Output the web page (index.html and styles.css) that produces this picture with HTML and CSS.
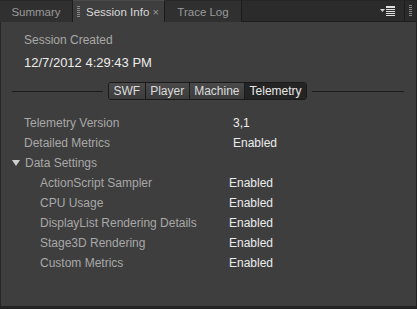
FILE: index.html
```html
<!DOCTYPE html>
<html>
<head>
<meta charset="utf-8">
<link rel="stylesheet" href="styles.css">
</head>
<body>
<div class="panel">
  <div class="tabbar">
    <div class="tab">Summary</div>
    <div class="tab active"><span class="grip"></span>Session Info<span class="close">×</span></div>
    <div class="tab">Trace Log</div>
    <div class="tabfill">
      <svg class="menu" width="15" height="10" viewBox="0 0 15 10">
        <path d="M0 3h5l-2.5 3z" fill="#d0d0d0"/>
        <rect x="6" y="0" width="9" height="2" fill="#e0e0e0"/>
        <rect x="6" y="3" width="9" height="1" fill="#e0e0e0"/>
        <rect x="6" y="5" width="9" height="1" fill="#e0e0e0"/>
        <rect x="6" y="7" width="9" height="1" fill="#e0e0e0"/>
        <rect x="6" y="9" width="9" height="1" fill="#e0e0e0"/>
      </svg>
    </div>
    <div class="tabgrip"><span class="grip"></span></div>
  </div>
  <div class="content">
    <div class="created">
      <div class="label">Session Created</div>
      <div class="date">12/7/2012 4:29:43 PM</div>
    </div>
    <div class="switcher">
      <div class="rule"></div>
      <div class="seg">
        <div class="btn">SWF</div>
        <div class="btn">Player</div>
        <div class="btn">Machine</div>
        <div class="btn on">Telemetry</div>
      </div>
      <div class="rule"></div>
    </div>
    <div class="rows">
      <div class="row"><span class="k">Telemetry Version</span><span class="v">3,1</span></div>
      <div class="row"><span class="k">Detailed Metrics</span><span class="v">Enabled</span></div>
      <div class="row group"><span class="tri"></span><span class="k">Data Settings</span></div>
      <div class="row sub"><span class="k">ActionScript Sampler</span><span class="v">Enabled</span></div>
      <div class="row sub"><span class="k">CPU Usage</span><span class="v">Enabled</span></div>
      <div class="row sub"><span class="k">DisplayList Rendering Details</span><span class="v">Enabled</span></div>
      <div class="row sub"><span class="k">Stage3D Rendering</span><span class="v">Enabled</span></div>
      <div class="row sub"><span class="k">Custom Metrics</span><span class="v">Enabled</span></div>
    </div>
  </div>
</div>
</body>
</html>
```
FILE: styles.css
```css
html, body {
  margin: 0;
  padding: 0;
  background: #232323;
}
body {
  width: 417px;
  height: 309px;
  font-family: "Liberation Sans", Arial, sans-serif;
  font-size: 12px;
  overflow: hidden;
}
.panel {
  width: 416px;
  height: 306px;
  background: #3e3e3e;
  border-left: 1px solid #262626;
  box-sizing: border-box;
  display: flex;
  flex-direction: column;
}
.tabbar {
  height: 22px;
  display: flex;
  background: #2b2b2b;
  border-bottom: 1px solid #1e1e1e;
  box-sizing: border-box;
  margin-left: -1px;
  font-size: 11.5px;
  white-space: nowrap;
}
.tab {
  display: flex;
  align-items: center;
  justify-content: center;
  color: #9a9a9a;
  background: #303030;
  border-right: 1px solid #1c1c1c;
  border-top: 1px solid #262626;
  box-sizing: border-box;
  height: 22px;
  flex: none;
}
.tab:first-child { width: 73px; }
.tab:nth-child(3) { width: 77px; }
.tab.active {
  background: #3e3e3e;
  color: #dadada;
  margin-bottom: -1px;
  padding: 0 5px 0 4px;
  width: 92px;
  justify-content: flex-start;
  border-top: 1px solid #4a4a4a;
}
.grip {
  display: inline-block;
  width: 3px;
  height: 12px;
  margin-right: 6px;
  background: repeating-linear-gradient(#8a8a8a 0 1px, transparent 1px 2px);
}
.close {
  color: #9a9a9a;
  font-size: 11px;
  margin-left: auto;
}
.tabfill {
  flex: 1;
  display: flex;
  align-items: center;
  justify-content: flex-end;
  padding-right: 9px;
  border-right: 1px solid #1c1c1c;
  border-top: 1px solid #262626;
}
.tabgrip {
  width: 11px;
  display: flex;
  align-items: center;
  justify-content: center;
  border-top: 1px solid #262626;
}
.tabgrip .grip { margin: 0; }
.content {
  flex: 1;
  display: flex;
  flex-direction: column;
  padding: 11px 12px 0 11px;
}
.created {
  padding-left: 12px;
}
.label {
  color: #a8a8a8;
  line-height: 14px;
}
.date {
  color: #ececec;
  font-size: 13px;
  margin-top: 8px;
  line-height: 16px;
}
.switcher {
  display: flex;
  align-items: center;
  gap: 5px;
  margin-top: 11px;
}
.rule {
  flex: 1;
  height: 1px;
  background: #1c1c1c;
}
.rule:first-child { flex: none; width: 91px; }
.seg {
  display: flex;
  border: 1px solid #1a1a1a;
  border-radius: 3px;
  overflow: hidden;
  height: 18px;
  box-sizing: border-box;
}
.btn {
  color: #dcdcdc;
  padding: 0 4.5px;
  display: flex;
  align-items: center;
  background: linear-gradient(#4a4a4a, #3c3c3c);
  border-left: 1px solid #1a1a1a;
}
.btn:first-child { border-left: none; }
.btn.on {
  background: #242424;
  color: #e8e8e8;
}
.rows {
  margin-top: 13px;
  display: flex;
  flex-direction: column;
}
.row {
  display: flex;
  align-items: center;
  height: 20px;
  padding-left: 12px;
}
.row .k {
  color: #a8a8a8;
  width: 209px;
}
.row .v {
  color: #ececec;
}
.row.group {
  padding-left: 0;
}
.tri {
  width: 0;
  height: 0;
  border-left: 4px solid transparent;
  border-right: 4px solid transparent;
  border-top: 6px solid #d0d0d0;
  margin-right: 5px;
}
.row.sub {
  padding-left: 28px;
}
.row.sub .k {
  width: 189px;
}
```
